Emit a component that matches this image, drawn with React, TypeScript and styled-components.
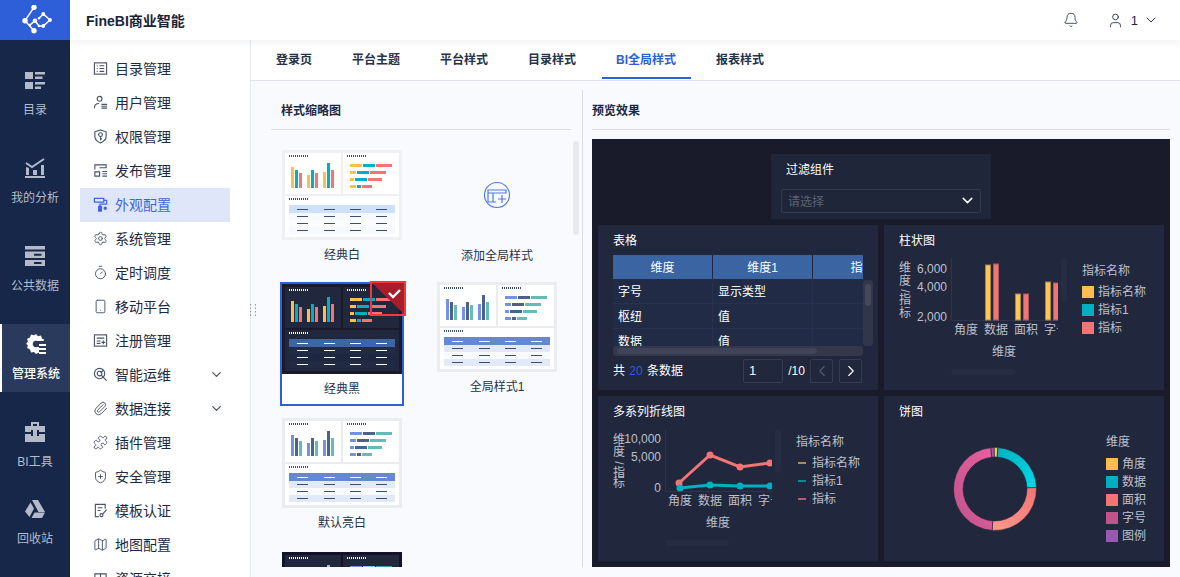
import React from "react";
import styled, { createGlobalStyle } from "styled-components";
import { Settings, Timer, Smartphone, Paperclip, Puzzle, ShieldPlus, Map as MapIcon, ChevronDown, ChevronLeft, ChevronRight, Bell, User } from "lucide-react";

const FONT = `"Liberation Sans", "Noto Sans CJK SC", sans-serif`;

const Global = createGlobalStyle`
  html, body { margin: 0; padding: 0; height: 100%; overflow: hidden; background: #f9fafe; }
  * { box-sizing: border-box; }
  body { font-family: ${FONT}; }
  svg text { font-family: ${FONT}; }
`;

const Shell = styled.div`display: flex; width: 1180px; height: 577px; overflow: hidden; position: relative;`;
const Rail = styled.nav`width: 70px; flex: none; background: #17274a; display: flex; flex-direction: column;`;
const LogoBox = styled.div`height: 40px; background: #2e5fd8; display: flex; align-items: center; justify-content: center; margin-bottom: 20px;`;
const RailItem = styled.div<{ $active?: boolean; $tight?: boolean }>`
  height: 68px; margin-bottom: ${p => (p.$tight ? "9px" : "20px")};
  display: flex; flex-direction: column; align-items: center; padding-top: 10px;
  font-size: 12px; line-height: 14px; white-space: nowrap;
  color: ${p => (p.$active ? "#fff" : "#b4bac8")};
  background: ${p => (p.$active ? "#2a3a5c" : "transparent")};
  border-left: ${p => (p.$active ? "2px solid #fff" : "0")};
  font-weight: ${p => (p.$active ? 500 : 400)};
  svg { display: block; margin-bottom: 13px; }
`;
const Main = styled.div`flex: 1; min-width: 0; display: flex; flex-direction: column;`;
const Header = styled.header`
  height: 40px; flex: none; background: #fff; display: flex; align-items: center; padding: 0 21px 0 16px;
  box-shadow: 0 2px 8px rgba(40,50,80,.08); position: relative; z-index: 2;
`;
const Brand = styled.div`font-size: 14px; font-weight: 700; color: #1b2436; flex: 1;`;
const HeadAction = styled.div`display: flex; align-items: center; color: #1e2a44; font-size: 13px;`;
const UserBox = styled.div`display: flex; align-items: center; gap: 7px; margin-left: 28px;`;
const UserCount = styled.span`margin-right: -2px;`;
const Body = styled.div`flex: 1; display: flex; min-height: 0;`;
const Menu = styled.aside`width: 181px; flex: none; background: #fff; border-right: 1px solid #e6e8ef; padding-top: 12px; overflow: hidden;`;
const MenuRow = styled.div<{ $active?: boolean }>`
  width: 150px; height: 34px; margin-left: 10px; padding: 0 6px 2px 13px; display: flex; align-items: center;
  font-size: 14px; color: ${p => (p.$active ? "#3f66d8" : "#1c2a44")};
  background: ${p => (p.$active ? "#e0e6fa" : "transparent")};
  svg.ico { width: 15px; height: 15px; margin-right: 7px; flex: none; color: ${p => (p.$active ? "#3f66d8" : "#47536a")}; }
`;
const MenuLabel = styled.span`flex: 1;`;
const Arrow = styled(ChevronDown)`width: 15px; height: 15px; color: #47536a;`;
const Content = styled.main`flex: 1; min-width: 0; display: flex; flex-direction: column;`;
const Tabs = styled.div`height: 41px; flex: none; background: #fff; border-bottom: 1px solid #dfe2ea; display: flex; padding-left: 25px; gap: 40px;`;
const Tab = styled.div<{ $active?: boolean }>`
  position: relative; height: 40px; line-height: 40px; font-size: 12px; font-weight: 700;
  color: ${p => (p.$active ? "#2e5fd8" : "#26324a")};
  ${p => p.$active && `&::after { content: ""; position: absolute; left: -14px; right: -15px; bottom: 1px; height: 2px; background: #2e5fd8; }`}
`;
const Panels = styled.div`flex: 1; display: flex; min-height: 0; padding-bottom: 10px; padding-top: 9px;`;
const LeftPanel = styled.section`
  width: 332px; flex: none; border-right: 1px solid #d9dce5; padding-left: 20px; position: relative; overflow: hidden;
`;
const PanelHead = styled.div`
  height: 40px; padding: 12px 0 0 10px; width: 300px; border-bottom: 1px solid #d9dce5;
  font-size: 12px; font-weight: 700; color: #1c2a44; line-height: 18px;
`;
const RightHead = styled(PanelHead)`width: 100%; padding-left: 0;`;
const Thumbs = styled.div`display: grid; grid-template-columns: 124px 124px; column-gap: 31px; grid-auto-rows: 124px; row-gap: 10px; margin: 18px 0 0 9px;`;
const ThumbCell = styled.div<{ $selected?: boolean; $up?: boolean }>`
  position: relative; height: 124px; border: 2px solid ${p => (p.$selected ? "#2e5fd8" : "transparent")};
  background: ${p => (p.$selected ? "#fff" : "transparent")};
  margin-top: ${p => (p.$up ? "-2px" : "0")};
  text-align: center;
`;
const ThumbSlot = styled.div`height: 90px; display: flex; align-items: center; justify-content: center; svg { display: block; }`;
const ThumbLabel = styled.div<{ $down?: boolean }>`
  font-size: 12px; color: #26324a; line-height: 30px; margin-top: ${p => (p.$down ? "1px" : "0")};
`;
const SelectBadge = styled.svg`position: absolute; left: 88px; top: -3px; width: 36px; height: 35px; display: block;`;
const PanelScroll = styled.div`position: absolute; right: 3px; top: 51px; width: 6px; height: 94px; border-radius: 3px; background: #e8e9ee;`;
const Grip = styled.svg`position: absolute; left: 249px; top: 303px; z-index: 3;`;
const RightPanel = styled.section`flex: 1; min-width: 0; padding: 0 10px 0 9px; display: flex; flex-direction: column;`;
const Preview = styled.div`margin-top: 9px; height: 428px; background: #191b2b; display: flex; flex-direction: column; align-items: center; padding-top: 15px;`;
const FilterCard = styled.div`width: 220px; height: 65px; background: #1f263a; padding: 8px 10px; color: #fff; font-size: 12px;`;
const FilterTitle = styled.div`line-height: 16px; padding-left: 5px; margin-bottom: 11px;`;
const FilterSelect = styled.div`height: 24px; border: 1px solid #34394e; border-radius: 2px; display: flex; align-items: center; justify-content: space-between; padding: 0 4px 2px 6px; color: #5c6173;`;
const Cards = styled.div`margin-top: 6px; display: grid; grid-template-columns: 280px 280px; grid-auto-rows: 165px; gap: 6px;`;
const Card = styled.div`background: #21273d; padding: 8px 15px 0; position: relative; overflow: hidden; color: #fff;`;
const CardTitle = styled.div`font-size: 12px; line-height: 16px; color: #fff;`;
const TableWrap = styled.div`position: relative; width: 250px; margin-top: 6px;`;
const TableClip = styled.div`height: 91px; width: 250px; overflow: hidden; display: grid; grid-template-columns: 100px 100px 100px; grid-auto-rows: 25px; align-content: start;`;
const HeadCell = styled.div`height: 24px; background: #3a64a2; border-right: 1px solid #21273d; line-height: 26px; font-size: 12px; text-align: center; color: #fff;`;
const BodyCell = styled.div`height: 25px; background: #212b45; border-right: 1px solid #283250; border-bottom: 1px solid #283250; padding-left: 5px; line-height: 27px; font-size: 12px; color: #fff; margin-top: -1px;`;
const HBar = styled.div`height: 10px; width: 250px; background: #34384b; border-radius: 3px; padding: 2px 4px;`;
const HThumb = styled.div`height: 6px; width: 200px; background: #40445a; border-radius: 3px;`;
const VBar = styled.div`position: absolute; left: 250px; top: 25px; width: 10px; height: 66px; background: #32364a; border-radius: 3px; padding: 4px 2px;`;
const VThumb = styled.div`width: 6px; height: 22px; border-radius: 3px; background: #454959;`;
const Pager = styled.div`display: flex; align-items: center; margin-top: 3px; padding-right: 1px; font-size: 12px; height: 24px;`;
const PagerInfo = styled.div`flex: 1; word-spacing: 1px; line-height: 22px; b { color: #2e5fd8; font-weight: 400; }`;
const PageInput = styled.div`width: 40px; height: 24px; border: 1px solid #363c52; border-radius: 2px; padding-left: 5px; line-height: 22px; font-size: 13px;`;
const PageTotal = styled.div`width: 27px; text-align: center;`;
const PageBtn = styled.div<{ $off?: boolean }>`
  width: 23px; height: 24px; margin-left: ${p => (p.$off ? "0" : "6px")}; border: 1px solid #363c52; border-radius: 2px;
  display: flex; align-items: center; justify-content: center; color: ${p => (p.$off ? "#565b6d" : "#fff")};
`;
const ChartBody = styled.div`display: flex; margin-top: 3px; svg { display: block; flex: none; }`;
const Legend = styled.div<{ $left: number; $gap?: number }>`margin-left: ${p => p.$left}px; padding-top: 10px; color: #bcc0cb; font-size: 12px; line-height: 18px; --title-gap: ${p => p.$gap ?? 3}px;`;
const LegendTitle = styled.div`margin-bottom: var(--title-gap);`;
const LegendRow = styled.div`display: flex; align-items: center; height: 18px;`;
const LegendSwatch = styled.span<{ $c: string }>`width: 12px; height: 12px; margin-right: 4px; background: ${p => p.$c};`;
const LegendDash = styled.span<{ $c: string }>`width: 8px; height: 2px; margin: 0 6px 0 2px; background: ${p => p.$c};`;

const ICO = { className: "ico", viewBox: "0 0 16 16", fill: "none", stroke: "currentColor", strokeWidth: 1.2 } as const;
const LUC = { className: "ico", strokeWidth: 1.5 } as const;

const menuIcons: Record<string, React.ReactNode> = {
  list: <svg {...ICO}><rect x="1.500" y="2" width="13" height="12" /><path d="M4 5h1M7 5h5M4 8h1M7 8h5M4 11h1M7 11h5" /></svg>,
  user: <svg {...ICO}><circle cx="7" cy="4" r="2.600" /><path d="M1.500 14c0-3.500 2-5 5-5" /><path d="M9 10h6M9 12h6M9 14h6" /></svg>,
  key: <svg {...ICO}><path d="M8 1l6 2v5c0 3.500-3 5.600-6 7-3-1.400-6-3.500-6-7V3z" /><circle cx="8" cy="6" r="2" /><path d="M8 8v4M8 10.500h1.500" /></svg>,
  pub: <svg {...ICO}><path d="M2 7V2h12v3H7" /><path d="M2 9.500h5V14H2zM10 9h5M10 11.500h5M10 14h5" /></svg>,
  roller: <svg {...ICO} strokeWidth={1.3}><path d="M1.500 1.500h10v4h-10z" /><path d="M11.500 3.500h3v4H7.500V10" /><rect x="6" y="10" width="3" height="5" fill="currentColor" /><circle cx="13" cy="12" r="1.200" fill="currentColor" /></svg>,
  reg: <svg {...ICO}><rect x="1.500" y="2" width="13" height="12" /><path d="M4 5.500h8M4 8.500h4M4 11h4M11 8v4M9 10h4" /></svg>,
  search: <svg {...ICO}><circle cx="7" cy="7" r="5.500" /><circle cx="7" cy="7" r="2.500" /><path d="M9 9l5.500 5.500M11 3.500L8 6" /></svg>,
  cert: <svg {...ICO}><path d="M13 6V1.500H2.500v13H6" /><path d="M5 5h5M5 8h3" /><circle cx="9" cy="13" r="1.600" /><path d="M10.500 11.500L14.500 7" /></svg>,
  res: <svg {...ICO}><path d="M2 3h12v10H2zM8 3v10" /></svg>,
};

const menu: { t: string; i: React.ReactNode; active?: boolean; more?: boolean }[] = [
  { t: "目录管理", i: menuIcons.list },
  { t: "用户管理", i: menuIcons.user },
  { t: "权限管理", i: menuIcons.key },
  { t: "发布管理", i: menuIcons.pub },
  { t: "外观配置", i: menuIcons.roller, active: true },
  { t: "系统管理", i: <Settings {...LUC} /> },
  { t: "定时调度", i: <Timer {...LUC} /> },
  { t: "移动平台", i: <Smartphone {...LUC} /> },
  { t: "注册管理", i: menuIcons.reg },
  { t: "智能运维", i: menuIcons.search, more: true },
  { t: "数据连接", i: <Paperclip {...LUC} />, more: true },
  { t: "插件管理", i: <Puzzle {...LUC} /> },
  { t: "安全管理", i: <ShieldPlus {...LUC} /> },
  { t: "模板认证", i: menuIcons.cert },
  { t: "地图配置", i: <MapIcon {...LUC} /> },
  { t: "资源交接", i: menuIcons.res },
];

const railSvg = { width: 20, height: 20, viewBox: "0 0 20 20", fill: "currentColor" } as const;
const rail = [
  { t: "目录", i: <svg {...railSvg}><path d="M0 2h8v7H0zM0 12h8v7H0zM10 2h10v2.500H10zM10 6.500h7.500V9H10zM10 12h10v2.500H10zM10 16.500h6V19h-6z" /></svg> },
  { t: "我的分析", i: <svg {...railSvg}><path d="M0 18h20v2H0zM1 9l3 1v7H1zM8 12h4v5H8zM16 7h3v10h-3z" /><path d="M1 5l6 4 6-4 6-4" fill="none" stroke="currentColor" strokeWidth="2" /></svg> },
  { t: "公共数据", i: <svg {...railSvg}><path d="M0 0h20v3.500H0zM0 5.500h20V12H0zM0 14h20v6H0z" /><path d="M9 7.800h7.500v2H9zM9 16h7.500v2H9z" fill="#17274a" /></svg> },
  { t: "管理系统", active: true, i: <svg {...railSvg}><path d="M10 0l2 2.200 3-.6 1 2.900 2 1-.4 1.500H11a3.200 3.200 0 100 6h2v5.500l-3 1.500-2-2-3 .5-1-3-2.800-1.500.6-3L0 10l1.800-2.300-.6-3 2.800-1.200 1-2.900 3 .6z" /><path d="M13 10h7v2h-7zM13 14h7v2h-7zM13 18h7v2h-7z" /></svg> },
  { t: "BI工具", i: <svg {...railSvg}><path d="M6 4V0h8v4h-2V2H8v2zM0 4h20v6h-6V8H6v2H0zM0 12h6v2h8v-2h6v8H0z" /><path d="M8 8h4v7H8z" /></svg> },
  { t: "回收站", i: <svg {...railSvg}><path d="M7 1h6l7 12h-6.500zM5.500 3.500L9 9.500 4.500 18 0 12.500zM9.500 13.500H20L17 19H6.500z" /></svg> },
];

type Palette = { outer: string; panel: string; bars: [string, string, string]; head: string; rows: [string, string, string]; line: string; headLine: string; dot: string };
const white: Palette = { outer: "#eef0f5", panel: "#fff", bars: ["#ffbc4f", "#00afc0", "#f27474"], head: "#cde0fc", rows: ["#f6f9fe", "#fbfcfe", "#f6f9fe"], line: "#3c4f6e", headLine: "#3c4f6e", dot: "#3c4f6e" };
const black: Palette = { outer: "#191b2b", panel: "#21273d", bars: ["#ffbc4f", "#00afc0", "#f27474"], head: "#3c65a4", rows: ["#212b45", "#1f2840", "#212b45"], line: "#fff", headLine: "#fff", dot: "#fff" };
const blue: Palette = { outer: "#eaecf0", panel: "#fff", bars: ["#7292e8", "#4c6387", "#64bdb5"], head: "#6488d2", rows: ["#e2e9f8", "#f8fafe", "#e2e9f8"], line: "#3c4f6e", headLine: "#fff", dot: "#3c4f6e" };
const midnight: Palette = { outer: "#12132a", panel: "#21273d", bars: ["#7292e8", "#9fb7f0", "#3f9d9d"], head: "#3c65a4", rows: ["#212b45", "#1f2840", "#212b45"], line: "#fff", headLine: "#fff", dot: "#fff" };

const vbars: [number, number][] = [[9, 17], [13, 20], [17, 23], [25, 25], [29, 20], [33, 23], [41, 22], [45, 13], [49, 20]];
const hbars: [number, number, number, number, number, number, number][] = [
  [14, 68, 12, 81, 12, 94, 16], [21, 68, 6, 75, 12, 88, 16], [28, 68, 4, 73, 12, 86, 14], [35, 68, 6, 75, 4, 80, 10],
];
const lineX = [15, 42, 68, 94];

function Thumb({ p }: { p: Palette }) {
  const Dots = ({ x, y }: { x: number; y: number }) => (
    <path d={`M${x} ${y}h19`} stroke={p.dot} strokeWidth="2" strokeDasharray="1 1" />
  );
  return (
    <svg width="120" height="90" viewBox="0 0 120 90">
      <rect width="120" height="90" fill={p.outer} />
      <rect x="3" y="3" width="56" height="41" fill={p.panel} />
      <rect x="61" y="3" width="56" height="41" fill={p.panel} />
      <rect x="3" y="46" width="114" height="41" fill={p.panel} />
      <Dots x={7} y={6} /><Dots x={65} y={6} /><Dots x={7} y={49} />
      {vbars.map(([x, y], i) => <rect key={i} x={x} y={y} width="3" height={38 - y} fill={p.bars[i % 3]} />)}
      {hbars.map(([y, a, aw, b, bw, c, cw]) => (
        <g key={y}>
          <rect x={a} y={y} width={aw} height="3" fill={p.bars[0]} />
          <rect x={b} y={y} width={bw} height="3" fill={p.bars[1]} />
          <rect x={c} y={y} width={cw} height="3" fill={p.bars[2]} />
        </g>
      ))}
      <rect x="7" y="55" width="106" height="8" fill={p.head} />
      <rect x="7" y="63" width="106" height="7" fill={p.rows[0]} />
      <rect x="7" y="70" width="106" height="7" fill={p.rows[1]} />
      <rect x="7" y="77" width="106" height="7" fill={p.rows[2]} />
      {lineX.map(x => (
        <g key={x}>
          <path d={`M${x} 59.500h11`} stroke={p.headLine} />
          <path d={`M${x} 66.500h11M${x} 73.500h11M${x} 80.500h11`} stroke={p.line} />
        </g>
      ))}
    </svg>
  );
}

const AXIS = "#2d344b";
const LABEL = "#bcc0cb";

function YTitle({ x, y, clip }: { x: number; y: number[]; clip: number }) {
  const id = `yt${clip}`;
  return (
    <g fill={LABEL} fontSize="12" textAnchor="middle">
      <clipPath id={id}><rect x="0" y="-20" width="14" height={clip + 20} /></clipPath>
      <g clipPath={`url(#${id})`}>
        <text x={x} y={y[0]}>维</text>
        <text x={x} y={y[1]}>度</text>
        <text x={x} y={y[2]} transform={`rotate(90 ${x} ${y[2] - 4})`}>/</text>
        <text x={x} y={y[3]}>指</text>
        <text x={x} y={y[4]}>标</text>
      </g>
    </g>
  );
}

function XLabels({ y, titleY }: { y: number; titleY: number }) {
  return (
    <g fill={LABEL} fontSize="12">
      {["角度", "数据", "面积", "字号"].map((t, i) => <text key={t} x={55 + i * 30} y={y}>{t}</text>)}
      <text x={93} y={titleY}>维度</text>
    </g>
  );
}

function BarChart() {
  const bars: [number, number, string, string][] = [
    [86, 55, "#ffc553", "#a38748"], [94, 56, "#f27474", "#a85a62"],
    [116, 26, "#ffc553", "#a38748"], [124, 26, "#f27474", "#a85a62"],
    [146, 38, "#ffc553", "#a38748"], [154, 37, "#f27474", "#a85a62"],
  ];
  return (
    <svg width="175" height="130" viewBox="0 12 175 130">
      <defs><clipPath id="bclip"><rect x="0" y="0" width="159" height="150" /></clipPath></defs>
      <YTitle x={6} y={[32, 45, 55, 64, 77]} clip={80} />
      <g fill={LABEL} fontSize="12" textAnchor="end">
        <text x="48" y="33">6,000</text>
        <text x="48" y="51">4,000</text>
        <text x="48" y="81">2,000</text>
      </g>
      <path d="M52.500 18v62.500H159" stroke={AXIS} fill="none" />
      <g clipPath="url(#bclip)">
        {bars.map(([x, h, c, s], i) => <rect key={i} x={x + 0.5} y={80 - h} width={5} height={h} fill={c} stroke={s} />)}
        <XLabels y={94} titleY={116} />
      </g>
      <rect x="162" y="18" width="6" height="44" rx="3" fill="#262c42" />
      <rect x="52" y="129" width="64" height="6" rx="3" fill="#262c42" />
    </svg>
  );
}

function LineChart() {
  const red = [[66, 52], [97, 24], [127, 36], [157, 32]];
  const teal = [[67, 57], [97, 54], [127, 55], [157, 55]];
  const pts = (a: number[][]) => a.map(p => p.join(",")).join(" ");
  return (
    <svg width="175" height="130" viewBox="0 -8 175 130">
      <defs><clipPath id="lclip"><rect x="0" y="-8" width="159" height="130" /></clipPath></defs>
      <YTitle x={6} y={[13, 25, 36, 46, 56]} clip={60} />
      <g fill={LABEL} fontSize="12" textAnchor="end">
        <text x="48" y="12">10,000</text>
        <text x="48" y="30">5,000</text>
        <text x="48" y="61">0</text>
      </g>
      <path d="M52.500 -2v62.500H159" stroke={AXIS} fill="none" />
      <g clipPath="url(#lclip)">
        <polyline points={pts(red)} fill="none" stroke="#f27474" strokeWidth="3" />
        {red.map(([x, y]) => <circle key={x} cx={x} cy={y} r="3.500" fill="#f27474" />)}
        <polyline points={pts(teal)} fill="none" stroke="#00afc0" strokeWidth="3" />
        {teal.map(([x, y]) => <circle key={x} cx={x} cy={y} r="3.500" fill="#00afc0" />)}
        <XLabels y={74} titleY={96} />
      </g>
      <rect x="162" y="-2" width="6" height="44" rx="3" fill="#262c42" />
      <rect x="52" y="109" width="64" height="6" rx="3" fill="#262c42" />
    </svg>
  );
}

function arc(a0: number, a1: number, R: number, r: number) {
  const pt = (a: number, q: number) => {
    const t = ((a - 90) * Math.PI) / 180;
    return `${(q * Math.cos(t)).toFixed(2)} ${(q * Math.sin(t)).toFixed(2)}`;
  };
  const large = a1 - a0 > 180 ? 1 : 0;
  return `M${pt(a0, R)}A${R} ${R} 0 ${large} 1 ${pt(a1, R)}L${pt(a1, r)}A${r} ${r} 0 ${large} 0 ${pt(a0, r)}Z`;
}

function PieChart() {
  return (
    <svg width="210" height="130" viewBox="0 0 210 130">
      <defs>
        <linearGradient id="gt" x1="0" y1="0" x2="1" y2="1"><stop offset="0" stopColor="#00afc0" /><stop offset="1" stopColor="#00dbe9" /></linearGradient>
        <linearGradient id="gr" x1="1" y1="0" x2="0" y2="1"><stop offset="0" stopColor="#f27474" /><stop offset="1" stopColor="#ff9a8c" /></linearGradient>
        <linearGradient id="gp" x1="0" y1="1" x2="1" y2="0"><stop offset="0" stopColor="#c0548a" /><stop offset="1" stopColor="#ea5fa0" /></linearGradient>
      </defs>
      <g transform="translate(96 66)" stroke="#21273d" strokeWidth="0.600">
        <path d={arc(-6, -1, 41.500, 32)} fill="#9a5ab0" />
        <path d={arc(-1, 4, 41.500, 32)} fill="#ffc553" />
        <path d={arc(4, 88, 41.500, 32)} fill="url(#gt)" />
        <path d={arc(88, 184, 41.500, 32)} fill="url(#gr)" />
        <path d={arc(184, 354, 41.500, 32)} fill="url(#gp)" />
      </g>
    </svg>
  );
}

function Logo() {
  const nodes: [number, number, number][] = [[14, 2.300, 2.700], [5, 15.700, 2.700], [14, 25.700, 2.700], [15, 15.700, 2.300], [19, 13.300, 1.200], [23.300, 9, 1.900], [30, 15, 1.900], [23.300, 21, 1.900], [19, 21, 1.200], [10, 20, 1.200]];
  return (
    <svg width="34" height="30" viewBox="-2 0 34 30" style={{ display: "block" }} fill="#fff" stroke="#fff" strokeWidth="1.500">
      <path d="M14 2.300L5 15.700L14 25.700M10 20L15 15.700L19 21H23.300L30 15L23.300 9L19 13.300" fill="none" />
      {nodes.map(([x, y, r]) => <circle key={`${x}-${y}`} cx={x} cy={y} r={r} stroke="none" />)}
    </svg>
  );
}

export default function App() {
  return (
    <Shell>
      <Global />
      <Rail>
        <LogoBox><Logo /></LogoBox>
        {rail.map(r => (
          <RailItem key={r.t} $active={r.active} $tight={r.t === "BI工具"}>
            {r.i}
            {r.t}
          </RailItem>
        ))}
      </Rail>
      <Main>
        <Header>
          <Brand>FineBI商业智能</Brand>
          <HeadAction>
            <Bell size={16} strokeWidth={1.2} />
            <UserBox>
              <User size={17} strokeWidth={1.2} />
              <UserCount>1</UserCount>
              <ChevronDown size={16} strokeWidth={1.4} />
            </UserBox>
          </HeadAction>
        </Header>
        <Body>
          <Menu>
            {menu.map(m => (
              <MenuRow key={m.t} $active={m.active}>
                {m.i}
                <MenuLabel>{m.t}</MenuLabel>
                {m.more && <Arrow />}
              </MenuRow>
            ))}
          </Menu>
          <Content>
            <Tabs>
              {["登录页", "平台主题", "平台样式", "目录样式", "BI全局样式", "报表样式"].map(t => (
                <Tab key={t} $active={t === "BI全局样式"}>{t}</Tab>
              ))}
            </Tabs>
            <Panels>
              <LeftPanel>
                <PanelHead>样式缩略图</PanelHead>
                <Thumbs>
                  <ThumbCell>
                    <ThumbSlot><Thumb p={white} /></ThumbSlot>
                    <ThumbLabel>经典白</ThumbLabel>
                  </ThumbCell>
                  <ThumbCell>
                    <ThumbSlot>
                      <svg width="28" height="28" viewBox="0 0 28 28" fill="none" stroke="#4f7be0" strokeWidth="1.200">
                        <circle cx="14" cy="14" r="12.500" />
                        <path d="M5 9h18v3H5zM5 12v9h8M10 12v9M15 18h8M19 14v8" />
                      </svg>
                    </ThumbSlot>
                    <ThumbLabel $down>添加全局样式</ThumbLabel>
                  </ThumbCell>
                  <ThumbCell $selected>
                    <ThumbSlot><Thumb p={black} /></ThumbSlot>
                    <ThumbLabel>经典黑</ThumbLabel>
                    <SelectBadge viewBox="0 0 36 35">
                      <path d="M1 1h34v33z" fill="#a81f2a" />
                      <rect x="1" y="1" width="34" height="33" fill="none" stroke="#f0393f" strokeWidth="2" />
                      <path d="M19 12l4 4 7-7" fill="none" stroke="#fff" strokeWidth="2.400" />
                    </SelectBadge>
                  </ThumbCell>
                  <ThumbCell $up>
                    <ThumbSlot><Thumb p={blue} /></ThumbSlot>
                    <ThumbLabel>全局样式1</ThumbLabel>
                  </ThumbCell>
                  <ThumbCell>
                    <ThumbSlot><Thumb p={blue} /></ThumbSlot>
                    <ThumbLabel>默认亮白</ThumbLabel>
                  </ThumbCell>
                  <span />
                  <ThumbCell>
                    <ThumbSlot><Thumb p={midnight} /></ThumbSlot>
                  </ThumbCell>
                </Thumbs>
                <PanelScroll />
              </LeftPanel>
              <RightPanel>
                <RightHead>预览效果</RightHead>
                <Preview>
                  <FilterCard>
                    <FilterTitle>过滤组件</FilterTitle>
                    <FilterSelect>
                      请选择
                      <ChevronDown size={17} color="#fff" strokeWidth={2} />
                    </FilterSelect>
                  </FilterCard>
                  <Cards>
                    <Card>
                      <CardTitle>表格</CardTitle>
                      <TableWrap>
                        <TableClip>
                          <HeadCell>维度</HeadCell><HeadCell>维度1</HeadCell><HeadCell>指标</HeadCell>
                          <BodyCell>字号</BodyCell><BodyCell>显示类型</BodyCell><BodyCell />
                          <BodyCell>枢纽</BodyCell><BodyCell>值</BodyCell><BodyCell />
                          <BodyCell>数据</BodyCell><BodyCell>值</BodyCell><BodyCell />
                        </TableClip>
                        <HBar><HThumb /></HBar>
                        <VBar><VThumb /></VBar>
                      </TableWrap>
                      <Pager>
                        <PagerInfo>共 <b>20</b> 条数据</PagerInfo>
                        <PageInput>1</PageInput>
                        <PageTotal>/10</PageTotal>
                        <PageBtn $off><ChevronLeft size={18} strokeWidth={1.5} /></PageBtn>
                        <PageBtn><ChevronRight size={18} strokeWidth={1.5} /></PageBtn>
                      </Pager>
                    </Card>
                    <Card>
                      <CardTitle>柱状图</CardTitle>
                      <ChartBody>
                        <BarChart />
                        <Legend $left={8}>
                          <LegendTitle>指标名称</LegendTitle>
                          <LegendRow><LegendSwatch $c="#ffbc4f" />指标名称</LegendRow>
                          <LegendRow><LegendSwatch $c="#00afc0" />指标1</LegendRow>
                          <LegendRow><LegendSwatch $c="#f27474" />指标</LegendRow>
                        </Legend>
                      </ChartBody>
                    </Card>
                    <Card>
                      <CardTitle>多系列折线图</CardTitle>
                      <ChartBody>
                        <LineChart />
                        <Legend $left={8}>
                          <LegendTitle>指标名称</LegendTitle>
                          <LegendRow><LegendDash $c="#ad8c4a" />指标名称</LegendRow>
                          <LegendRow><LegendDash $c="#0c8796" />指标1</LegendRow>
                          <LegendRow><LegendDash $c="#b65f66" />指标</LegendRow>
                        </Legend>
                      </ChartBody>
                    </Card>
                    <Card>
                      <CardTitle>饼图</CardTitle>
                      <ChartBody>
                        <PieChart />
                        <Legend $left={-3} $gap={4}>
                          <LegendTitle>维度</LegendTitle>
                          <LegendRow><LegendSwatch $c="#ffbc4f" />角度</LegendRow>
                          <LegendRow><LegendSwatch $c="#00afc0" />数据</LegendRow>
                          <LegendRow><LegendSwatch $c="#f27474" />面积</LegendRow>
                          <LegendRow><LegendSwatch $c="#c0548a" />字号</LegendRow>
                          <LegendRow><LegendSwatch $c="#9a5ab0" />图例</LegendRow>
                        </Legend>
                      </ChartBody>
                    </Card>
                  </Cards>
                </Preview>
              </RightPanel>
            </Panels>
          </Content>
        </Body>
      </Main>
      <Grip width="10" height="14" viewBox="0 0 10 14">
        <path d="M1.500 1v12M6.500 1v12" stroke="#8a94a8" strokeDasharray="1.500 2" />
      </Grip>
    </Shell>
  );
}
